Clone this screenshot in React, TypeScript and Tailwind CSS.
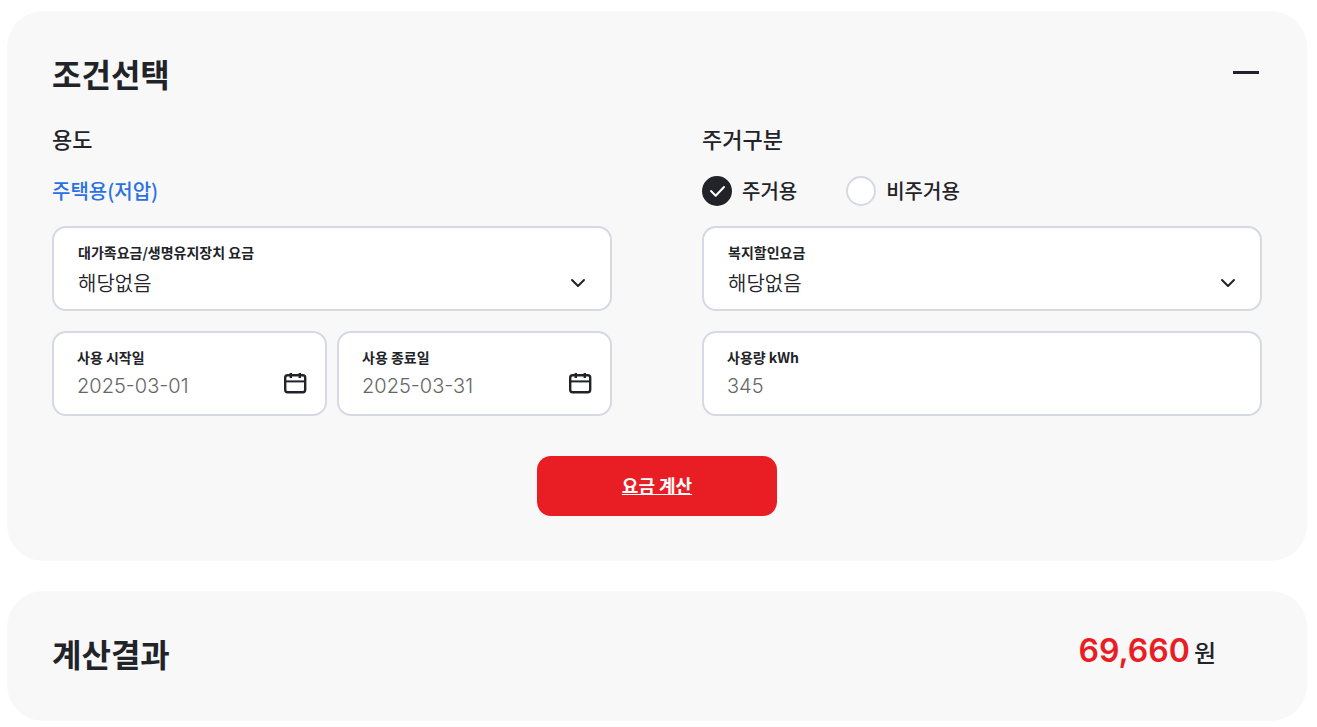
import React, { useState } from 'react';

const CalendarIcon = () => (
  <svg width="24" height="24" viewBox="0 0 24 24" fill="none" stroke="#222328" strokeWidth="2.4">
    <rect x="2.2" y="4.2" width="20" height="17" rx="2.4" />
    <path d="M2 10.4h20" strokeWidth="2" />
    <path d="M7.8 2v5M16.8 2v5" />
  </svg>
);

const ChevronIcon = () => (
  <svg
    className="pointer-events-none shrink-0"
    width="16"
    height="10"
    viewBox="0 0 16 10"
    fill="none"
    stroke="#222328"
    strokeWidth="2"
    strokeLinecap="round"
    strokeLinejoin="round"
  >
    <path d="M2 2l6 6 6-6" />
  </svg>
);

const SelectField = ({ id, label }: { id: string; label: string }) => (
  <div className="h-[85px] rounded-[14px] border-2 border-[#d6d9e3] bg-white pt-[14px] pr-6 pl-6">
    <label htmlFor={id} className="block text-sm leading-5 font-bold">
      {label}
    </label>
    <div className="mt-[5px] flex h-8 items-center">
      <select id={id} className="h-8 min-w-0 flex-1 appearance-none bg-transparent text-xl font-[350] outline-none">
        <option>해당없음</option>
      </select>
      <ChevronIcon />
    </div>
  </div>
);

const TextField = ({ id, label, value, calendar }: { id: string; label: string; value: string; calendar?: boolean }) => {
  const [text, setText] = useState(value);

  return (
    <div className="h-[85px] min-w-0 rounded-[14px] border-2 border-[#d6d9e3] bg-white pt-[14px] pr-[18px] pl-[23px]">
      <label htmlFor={id} className="block text-sm leading-5 font-bold">
        {label}
      </label>
      <div className="flex h-8 items-start">
        <input
          id={id}
          type="text"
          value={text}
          onChange={(e) => setText(e.target.value)}
          className="mt-[3px] h-8 min-w-0 flex-1 bg-transparent font-['Inter','Noto_Sans_CJK_KR',sans-serif] text-xl font-light text-[#666] outline-none"
        />
        {calendar && (
          <button type="button" aria-label={`${label} 선택`} className="mt-1">
            <CalendarIcon />
          </button>
        )}
      </div>
    </div>
  );
};

const RadioOption = ({ label, checked, onSelect }: { label: string; checked: boolean; onSelect: () => void }) => (
  <label className="flex items-center gap-[10px] text-xl leading-[30px] font-medium">
    <span className="relative h-[30px] w-[30px]">
      <input
        type="radio"
        name="residence"
        checked={checked}
        onChange={onSelect}
        className="block h-[30px] w-[30px] appearance-none rounded-full border-2 border-[#d6d9e3] bg-white checked:border-[#222328] checked:bg-[#222328]"
      />
      {checked && (
        <svg
          className="pointer-events-none absolute inset-0"
          width="30"
          height="30"
          viewBox="0 0 30 30"
          fill="none"
          stroke="#fff"
          strokeWidth="2"
          strokeLinecap="round"
          strokeLinejoin="round"
        >
          <path d="M9 15l4.7 4.7L22 11" />
        </svg>
      )}
    </span>
    {label}
  </label>
);

const App = () => {
  const [residence, setResidence] = useState('주거용');

  return (
    <main className="flex flex-col gap-[30px] pt-[11px] pr-[10px] pl-[7px] pb-1.5 font-['Noto_Sans_CJK_KR',sans-serif] text-[#222328]">
      <section className="rounded-[36px] bg-[#f8f8f8] px-[45px] pt-[42px] pb-[45px]">
        <div className="mb-[29px] flex items-start justify-between">
          <h2 className="text-[32px] leading-[41px] font-bold">조건선택</h2>
          <button type="button" aria-label="접기" className="flex h-[39px] w-8 items-center justify-center">
            <span className="h-[3px] w-[26px] bg-[#222328]" />
          </button>
        </div>

        <div className="grid grid-cols-2 gap-x-[90px]">
          <div>
            <h3 className="mb-[23px] text-[22px] leading-[30px] font-medium">용도</h3>
            <p className="mb-5 text-xl leading-[30px] font-medium text-[#2b70e4]">주택용(저압)</p>
            <SelectField id="family" label="대가족요금/생명유지장치 요금" />
            <div className="mt-5 grid grid-cols-2 gap-[10px]">
              <TextField id="start" label="사용 시작일" value="2025-03-01" calendar />
              <TextField id="end" label="사용 종료일" value="2025-03-31" calendar />
            </div>
          </div>
          <div>
            <h3 className="mb-[23px] text-[22px] leading-[30px] font-medium">주거구분</h3>
            <div className="mb-5 flex gap-[49px]">
              {['주거용', '비주거용'].map((option) => (
                <RadioOption
                  key={option}
                  label={option}
                  checked={residence === option}
                  onSelect={() => setResidence(option)}
                />
              ))}
            </div>
            <SelectField id="welfare" label="복지할인요금" />
            <div className="mt-5">
              <TextField id="usage" label="사용량 kWh" value="345" />
            </div>
          </div>
        </div>

        <div className="mt-10 flex justify-center">
          <button type="button" className="h-[60px] w-60 rounded-[14px] bg-[#e91e24] pb-[3px] text-lg font-bold text-white underline">
            요금 계산
          </button>
        </div>
      </section>

      <section className="flex items-start justify-between rounded-[36px] bg-[#f8f8f8] px-[45px] pt-[42px] pb-[47px]">
        <h2 className="text-[32px] leading-[41px] font-bold">계산결과</h2>
        <p className="flex items-baseline gap-1 pr-[46px] text-2xl leading-9 font-medium">
          <strong className="font-['Inter',sans-serif] text-[32px] font-semibold text-[#e91e24]">69,660</strong>
          원
        </p>
      </section>
    </main>
  );
};

export default App;
